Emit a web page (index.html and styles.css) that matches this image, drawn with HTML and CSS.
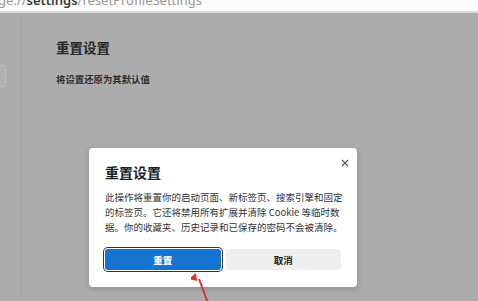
FILE: index.html
```html
<!DOCTYPE html>
<html lang="zh">
<head>
<meta charset="utf-8">
<link rel="stylesheet" href="styles.css">
</head>
<body>
<div class="addr">
  <div class="url"><span class="dim">ge://</span><span class="host">settings</span><span class="dim">/resetProfileSettings</span></div>
</div>
<div class="page">
  <div class="side"><div class="tab"></div></div>
  <div class="content">
    <h1 class="ptitle">重置设置</h1>
    <p class="psub">将设置还原为其默认值</p>
  </div>
</div>
<div class="dialog">
  <div class="dhead">
    <h2 class="dtitle">重置设置</h2>
    <svg class="close" width="8" height="8" viewBox="0 0 8 8"><path d="M1 1L7 7M7 1L1 7" stroke="#555" stroke-width="1.1"/></svg>
  </div>
  <p class="dbody">此操作将重置你的启动页面、新标签页、搜索引擎和固定<br>的标签页。它还将禁用所有扩展并清除 Cookie 等临时数<br>据。你的收藏夹、历史记录和已保存的密码不会被清除。</p>
  <div class="btns">
    <button class="btn primary">重置</button>
    <button class="btn">取消</button>
  </div>
</div>
<svg class="arrow" width="30" height="40" viewBox="0 0 30 40"><path d="M17 36L8 12" stroke="#d6322c" stroke-width="2"/><path d="M1 6L9 10L2 14Z" fill="#d6322c" transform="rotate(-68 4 11)"/></svg>
</body>
</html>
```
FILE: styles.css
```css
html, body {
  margin: 0;
  padding: 0;
  width: 478px;
  height: 301px;
  overflow: hidden;
  background: #acacac;
  font-family: "Noto Sans CJK SC", "Noto Sans", sans-serif;
}
.addr {
  height: 11px;
  background: #fbfbfb;
  border-bottom: 2px solid #d9d9d9;
  overflow: hidden;
  position: relative;
}
.url {
  font-family: "Noto Sans", sans-serif;
  font-size: 13px;
  line-height: 13px;
  margin-top: -6px;
  margin-left: -2px;
  white-space: nowrap;
  color: #9a9a9a;
}
.host { color: #3a3a3a; font-weight: 600; }
.page {
  display: flex;
  height: 288px;
}
.side {
  width: 21px;
  border-right: 1px solid #a2a2a2;
  position: relative;
}
.tab {
  margin-top: 52px;
  margin-left: -6px;
  width: 10px;
  height: 20px;
  border: 1px solid #bcbcbc;
  border-radius: 3px;
  background: #b0b0b0;
}
.content {
  padding-left: 34px;
}
.ptitle {
  margin: 25px 0 0;
  font-size: 13.5px;
  line-height: 18px;
  font-weight: 700;
  color: #262626;
}
.psub {
  margin: 17px 0 0;
  font-size: 9.4px;
  line-height: 12px;
  font-weight: 700;
  color: #2e2e2e;
}
.dialog {
  position: absolute;
  left: 89px;
  top: 148px;
  width: 268px;
  height: 139px;
  box-sizing: border-box;
  background: #fff;
  border-radius: 4px;
  box-shadow: 0 2px 6px rgba(0,0,0,0.18);
  padding: 13px 16px 0 16px;
}
.dhead {
  display: flex;
  justify-content: space-between;
  align-items: flex-start;
}
.dtitle {
  margin: 2px 0 0;
  font-size: 14px;
  line-height: 18px;
  font-weight: 700;
  color: #1f1f1f;
}
.close { margin-top: -2px; margin-right: -8px; }
.dbody {
  margin: 9px 0 0;
  font-size: 9.5px;
  line-height: 15px;
  color: #333;
  white-space: nowrap;
}
.btns {
  display: flex;
  gap: 5px;
  margin-top: 14px;
}
.btn {
  width: 116px;
  height: 21px;
  box-sizing: border-box;
  border: none;
  border-radius: 3px;
  background: #efefef;
  font-family: inherit;
  font-size: 9.5px;
  font-weight: 700;
  color: #222;
  padding: 0;
}
.btn.primary {
  background: #1674d1;
  color: #fff;
  box-shadow: 0 0 0 1px #fff, 0 0 0 2px #333;
}
.arrow {
  position: absolute;
  left: 191px;
  top: 267px;
}
```
